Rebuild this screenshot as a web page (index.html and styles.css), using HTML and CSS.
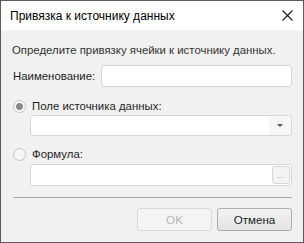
FILE: index.html
```html
<!DOCTYPE html>
<html lang="ru">

<head>
    <meta charset="UTF-8">
    <title>Привязка к источнику данных</title>
    <link rel="stylesheet" href="styles.css">
</head>

<body>
    <div class="dialog">
        <div class="titlebar">
            <span class="title">Привязка к источнику данных</span>
            <svg class="close" width="11" height="11" viewBox="0 0 11 11">
                <path d="M0.5 0.5 L10.5 10.5 M10.5 0.5 L0.5 10.5" stroke="#1a1a1a" stroke-width="1.1" fill="none" />
            </svg>
        </div>

        <div class="content">
            <div class="intro">Определите привязку ячейки к источнику данных.</div>

            <div class="name-row">
                <label for="name">Наименование:</label>
                <div class="field name-field"></div>
            </div>

            <div class="radio-row">
                <span class="radio checked"></span>
                <span>Поле источника данных:</span>
            </div>
            <div class="field combo">
                <div class="combo-text"></div>
                <div class="combo-btn"><span class="arrow"></span></div>
            </div>

            <div class="radio-row second">
                <span class="radio"></span>
                <span>Формула:</span>
            </div>
            <div class="field formula">
                <div class="dots-btn">...</div>
            </div>

            <div class="separator"></div>

            <div class="buttons">
                <button class="btn disabled">OK</button>
                <button class="btn">Отмена</button>
            </div>
        </div>
    </div>
</body>

</html>
```

FILE: styles.css
```css
body {
    margin: 0;
    font-family: "Liberation Sans", Arial, sans-serif;
    font-size: 11.4px;
    color: #1e1e1e;
}

.dialog {
    width: 304px;
    height: 243px;
    box-sizing: border-box;
    border: 1px solid #5c5c5c;
    background-color: #f1f1f1;
}

.titlebar {
    height: 29px;
    background-color: #ffffff;
    display: flex;
    align-items: center;
    justify-content: space-between;
    padding: 0 10px 0 9px;
}

.title {
    font-size: 12px;
    color: #000000;
}

.content {
    padding: 0 11px 0 11px;
}

.intro {
    margin-top: 12px;
    line-height: 16px;
    color: #333333;
    white-space: nowrap;
}

.field {
    box-sizing: border-box;
    background-color: #ffffff;
    border: 1px solid #d6d6d6;
    border-radius: 3px;
}

.name-row {
    margin-top: 7px;
    display: flex;
    align-items: center;
    justify-content: space-between;
    padding-left: 1px;
}

.name-field {
    width: 191px;
    height: 22px;
    flex-shrink: 0;
}

.radio-row {
    margin-top: 11px;
    height: 16px;
    display: flex;
    align-items: center;
    gap: 6px;
    padding-left: 1px;
}

.radio-row.second {
    margin-top: 10px;
}

.radio {
    width: 13px;
    height: 13px;
    box-sizing: border-box;
    border: 1px solid #c4c4c4;
    border-radius: 50%;
    background-color: #f6f6f6;
    display: flex;
    align-items: center;
    justify-content: center;
}

.radio.checked::after {
    content: "";
    width: 7px;
    height: 7px;
    border-radius: 50%;
    background-color: #8c8c8c;
    border: 1px solid #777777;
    box-sizing: border-box;
}

.combo {
    margin: 1px 0 0 18px;
    height: 21px;
    display: flex;
}

.combo-text {
    flex: 1;
}

.combo-btn {
    width: 22px;
    background-color: #f7f7f7;
    border-radius: 0 3px 3px 0;
    display: flex;
    align-items: center;
    justify-content: center;
}

.arrow {
    width: 0;
    height: 0;
    border-left: 3px solid transparent;
    border-right: 3px solid transparent;
    border-top: 3px solid #555555;
}

.formula {
    margin: 2px 0 0 18px;
    height: 22px;
    display: flex;
    justify-content: flex-end;
    align-items: center;
    padding-right: 1px;
}

.dots-btn {
    width: 18px;
    height: 18px;
    box-sizing: border-box;
    border: 1px solid #d6d6d6;
    border-radius: 3px;
    background-color: #f3f3f3;
    color: #b0b0b0;
    font-size: 9px;
    line-height: 16px;
    text-align: center;
}

.separator {
    margin: 11px 0 0 1px;
    height: 1px;
    background-color: #a8a8a8;
}

.buttons {
    margin-top: 10px;
    display: flex;
    justify-content: flex-end;
    gap: 5px;
}

.btn {
    width: 75px;
    height: 23px;
    font-family: "Liberation Sans", Arial, sans-serif;
    font-size: 11.6px;
    color: #1e1e1e;
    border: 1px solid #adadad;
    border-radius: 3px;
    background: linear-gradient(#f2f2f2, #e4e4e4);
    padding: 0;
}

.btn.disabled {
    color: #b4b4b4;
    border-color: #d9d9d9;
    background: #f4f4f4;
}
```
